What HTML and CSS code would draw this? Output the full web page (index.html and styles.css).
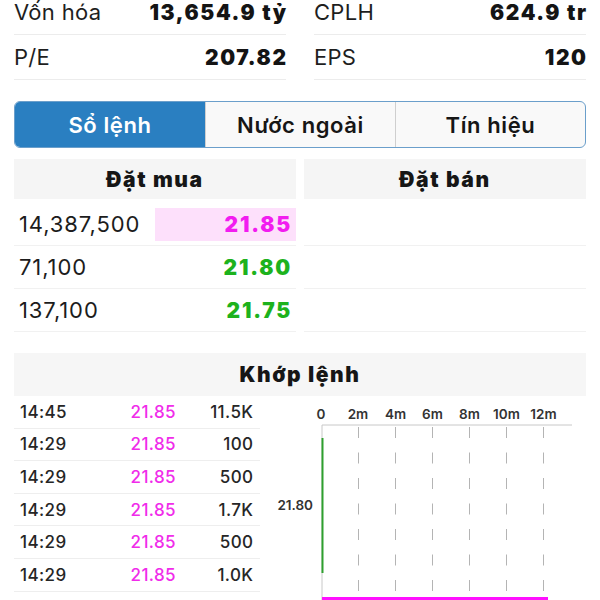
FILE: index.html
```html
<!DOCTYPE html>
<html lang="vi">
<head>
<meta charset="utf-8">
<title>Sổ lệnh</title>
<link rel="stylesheet" href="styles.css">
</head>
<body>
<div class="page">
  <div class="stats">
    <div class="stat"><span class="label">Vốn hóa</span><span class="value">13,654.9 tỷ</span></div>
    <div class="stat"><span class="label">CPLH</span><span class="value">624.9 tr</span></div>
    <div class="stat"><span class="label">P/E</span><span class="value">207.82</span></div>
    <div class="stat"><span class="label">EPS</span><span class="value">120</span></div>
  </div>

  <div class="tabs">
    <div class="tab active">Sổ lệnh</div>
    <div class="tab">Nước ngoài</div>
    <div class="tab">Tín hiệu</div>
  </div>

  <div class="book">
    <div class="side">
      <div class="side-head">Đặt mua</div>
      <div class="brow"><span class="vol">14,387,500</span><span class="price ceil hl">21.85</span></div>
      <div class="brow"><span class="vol">71,100</span><span class="price up">21.80</span></div>
      <div class="brow"><span class="vol">137,100</span><span class="price up">21.75</span></div>
    </div>
    <div class="side">
      <div class="side-head">Đặt bán</div>
      <div class="brow"></div>
      <div class="brow"></div>
      <div class="brow"></div>
    </div>
  </div>

  <div class="match">
    <div class="match-head">Khớp lệnh</div>
    <div class="match-body">
      <div class="trades">
        <div class="trow"><span class="t">14:45</span><span class="p">21.85</span><span class="q">11.5K</span></div>
        <div class="trow"><span class="t">14:29</span><span class="p">21.85</span><span class="q">100</span></div>
        <div class="trow"><span class="t">14:29</span><span class="p">21.85</span><span class="q">500</span></div>
        <div class="trow"><span class="t">14:29</span><span class="p">21.85</span><span class="q">1.7K</span></div>
        <div class="trow"><span class="t">14:29</span><span class="p">21.85</span><span class="q">500</span></div>
        <div class="trow"><span class="t">14:29</span><span class="p">21.85</span><span class="q">1.0K</span></div>
      </div>
      <svg class="chart" width="326" height="210" viewBox="0 0 326 210">
        <g class="xlab">
          <text x="61" y="23">0</text>
          <text x="98" y="23">2m</text>
          <text x="135.5" y="23">4m</text>
          <text x="172.5" y="23">6m</text>
          <text x="209.5" y="23">8m</text>
          <text x="246.5" y="23">10m</text>
          <text x="283.5" y="23">12m</text>
        </g>
        <line x1="62" y1="29" x2="312" y2="29" stroke="#c8c8c8" stroke-width="1"/>
        <line x1="62" y1="29" x2="62" y2="210" stroke="#c8c8c8" stroke-width="1"/>
        <g stroke="#b4b4b4" stroke-width="1" stroke-dasharray="11 14.5">
          <line x1="98.5" y1="31" x2="98.5" y2="210"/>
          <line x1="135.5" y1="31" x2="135.5" y2="210"/>
          <line x1="172.5" y1="31" x2="172.5" y2="210"/>
          <line x1="209.5" y1="31" x2="209.5" y2="210"/>
          <line x1="246.5" y1="31" x2="246.5" y2="210"/>
          <line x1="283.5" y1="31" x2="283.5" y2="210"/>
        </g>
        <line x1="62.5" y1="42" x2="62.5" y2="177" stroke="#2fa02f" stroke-width="2"/>
        <rect x="62" y="201" width="226" height="5" fill="#ff10ff"/>
        <text class="ylab" x="53" y="114">21.80</text>
      </svg>
    </div>
  </div>
</div>
</body>
</html>
```

FILE: styles.css
```css
* { box-sizing: border-box; }
html, body { margin: 0; padding: 0; background: #fff; }
body {
  font-family: Inter, "Noto Sans", "DejaVu Sans", sans-serif;
  color: #1c1c1c;
  width: 600px;
  height: 600px;
  overflow: hidden;
}
.page { padding: 0 14px; }

.stats {
  margin-top: -10px;
  display: grid;
  grid-template-columns: 1fr 1fr;
  column-gap: 28px;
}
.stat {
  height: 45px;
  display: flex;
  align-items: center;
  justify-content: space-between;
  border-bottom: 1px solid #ececec;
  font-size: 22px;
}
.stat .label { font-weight: 400; color: #1e1e1e; letter-spacing: 0.3px; }
.stat .value {
  font-weight: 900;
  color: #141414;
  font-size: 21px;
  letter-spacing: 1.6px;
  margin-right: -1.6px;
}

.tabs {
  margin-top: 21px;
  height: 47px;
  display: grid;
  grid-template-columns: 1fr 1fr 1fr;
  border: 1.5px solid #6b9fcb;
  border-radius: 6px;
  overflow: hidden;
  background: #f9f9f9;
}
.tab {
  display: flex;
  align-items: center;
  justify-content: center;
  font-size: 22px;
  font-weight: 600;
  letter-spacing: 0.6px;
  color: #161616;
  border-left: 1px solid #cfcfcf;
}
.tab:first-child { border-left: none; }
.tab.active { background: #2a7fc1; color: #fff; }

.book {
  margin-top: 11px;
  display: grid;
  grid-template-columns: 1fr 1fr;
  column-gap: 8px;
}
.side-head {
  height: 40px;
  margin-bottom: 4px;
  background: #f5f5f5;
  display: flex;
  align-items: center;
  justify-content: center;
  font-size: 21px;
  font-weight: 900;
  letter-spacing: 1.6px;
  color: #161616;
}
.brow {
  height: 43px;
  display: grid;
  grid-template-columns: 1fr 1fr;
  align-items: center;
  border-bottom: 1px solid #f1f1f1;
  font-size: 22px;
}
.vol { padding-left: 5px; color: #1c1c1c; letter-spacing: 0.9px; }
.price {
  font-weight: 900;
  font-size: 21px;
  letter-spacing: 1.8px;
  text-align: right;
  padding-right: 4px;
  height: 33px;
  line-height: 33px;
}
.price.hl { background: #fde0fb; }
.ceil { color: #f21cf0; }
.up { color: #1db21d; }

.match { margin-top: 21px; }
.match-head {
  height: 43px;
  background: #f6f6f6;
  display: flex;
  align-items: center;
  justify-content: center;
  font-size: 21px;
  font-weight: 900;
  letter-spacing: 1.6px;
  color: #161616;
}
.match-body {
  display: flex;
  align-items: flex-start;
}
.trades { width: 246px; flex: none; }
.trow {
  height: 32.6px;
  display: grid;
  grid-template-columns: 100px 63px 1fr;
  align-items: center;
  border-bottom: 1px solid #eeeeee;
  font-size: 17px;
  font-weight: 500;
  letter-spacing: 0.4px;
}
.trow .t { padding-left: 6px; color: #262626; }
.trow .p { text-align: right; color: #f02cea; padding-right: 1px; }
.trow .q { text-align: right; padding-right: 7px; color: #262626; margin-right: -0.4px; }

.chart { display: block; flex: none; }
.xlab text {
  font-family: Inter, "Noto Sans", sans-serif;
  font-size: 13.5px;
  font-weight: 600;
  fill: #333;
  text-anchor: middle;
}
.ylab {
  font-family: Inter, "Noto Sans", sans-serif;
  font-size: 13.5px;
  font-weight: 600;
  fill: #333;
  text-anchor: end;
}
```
